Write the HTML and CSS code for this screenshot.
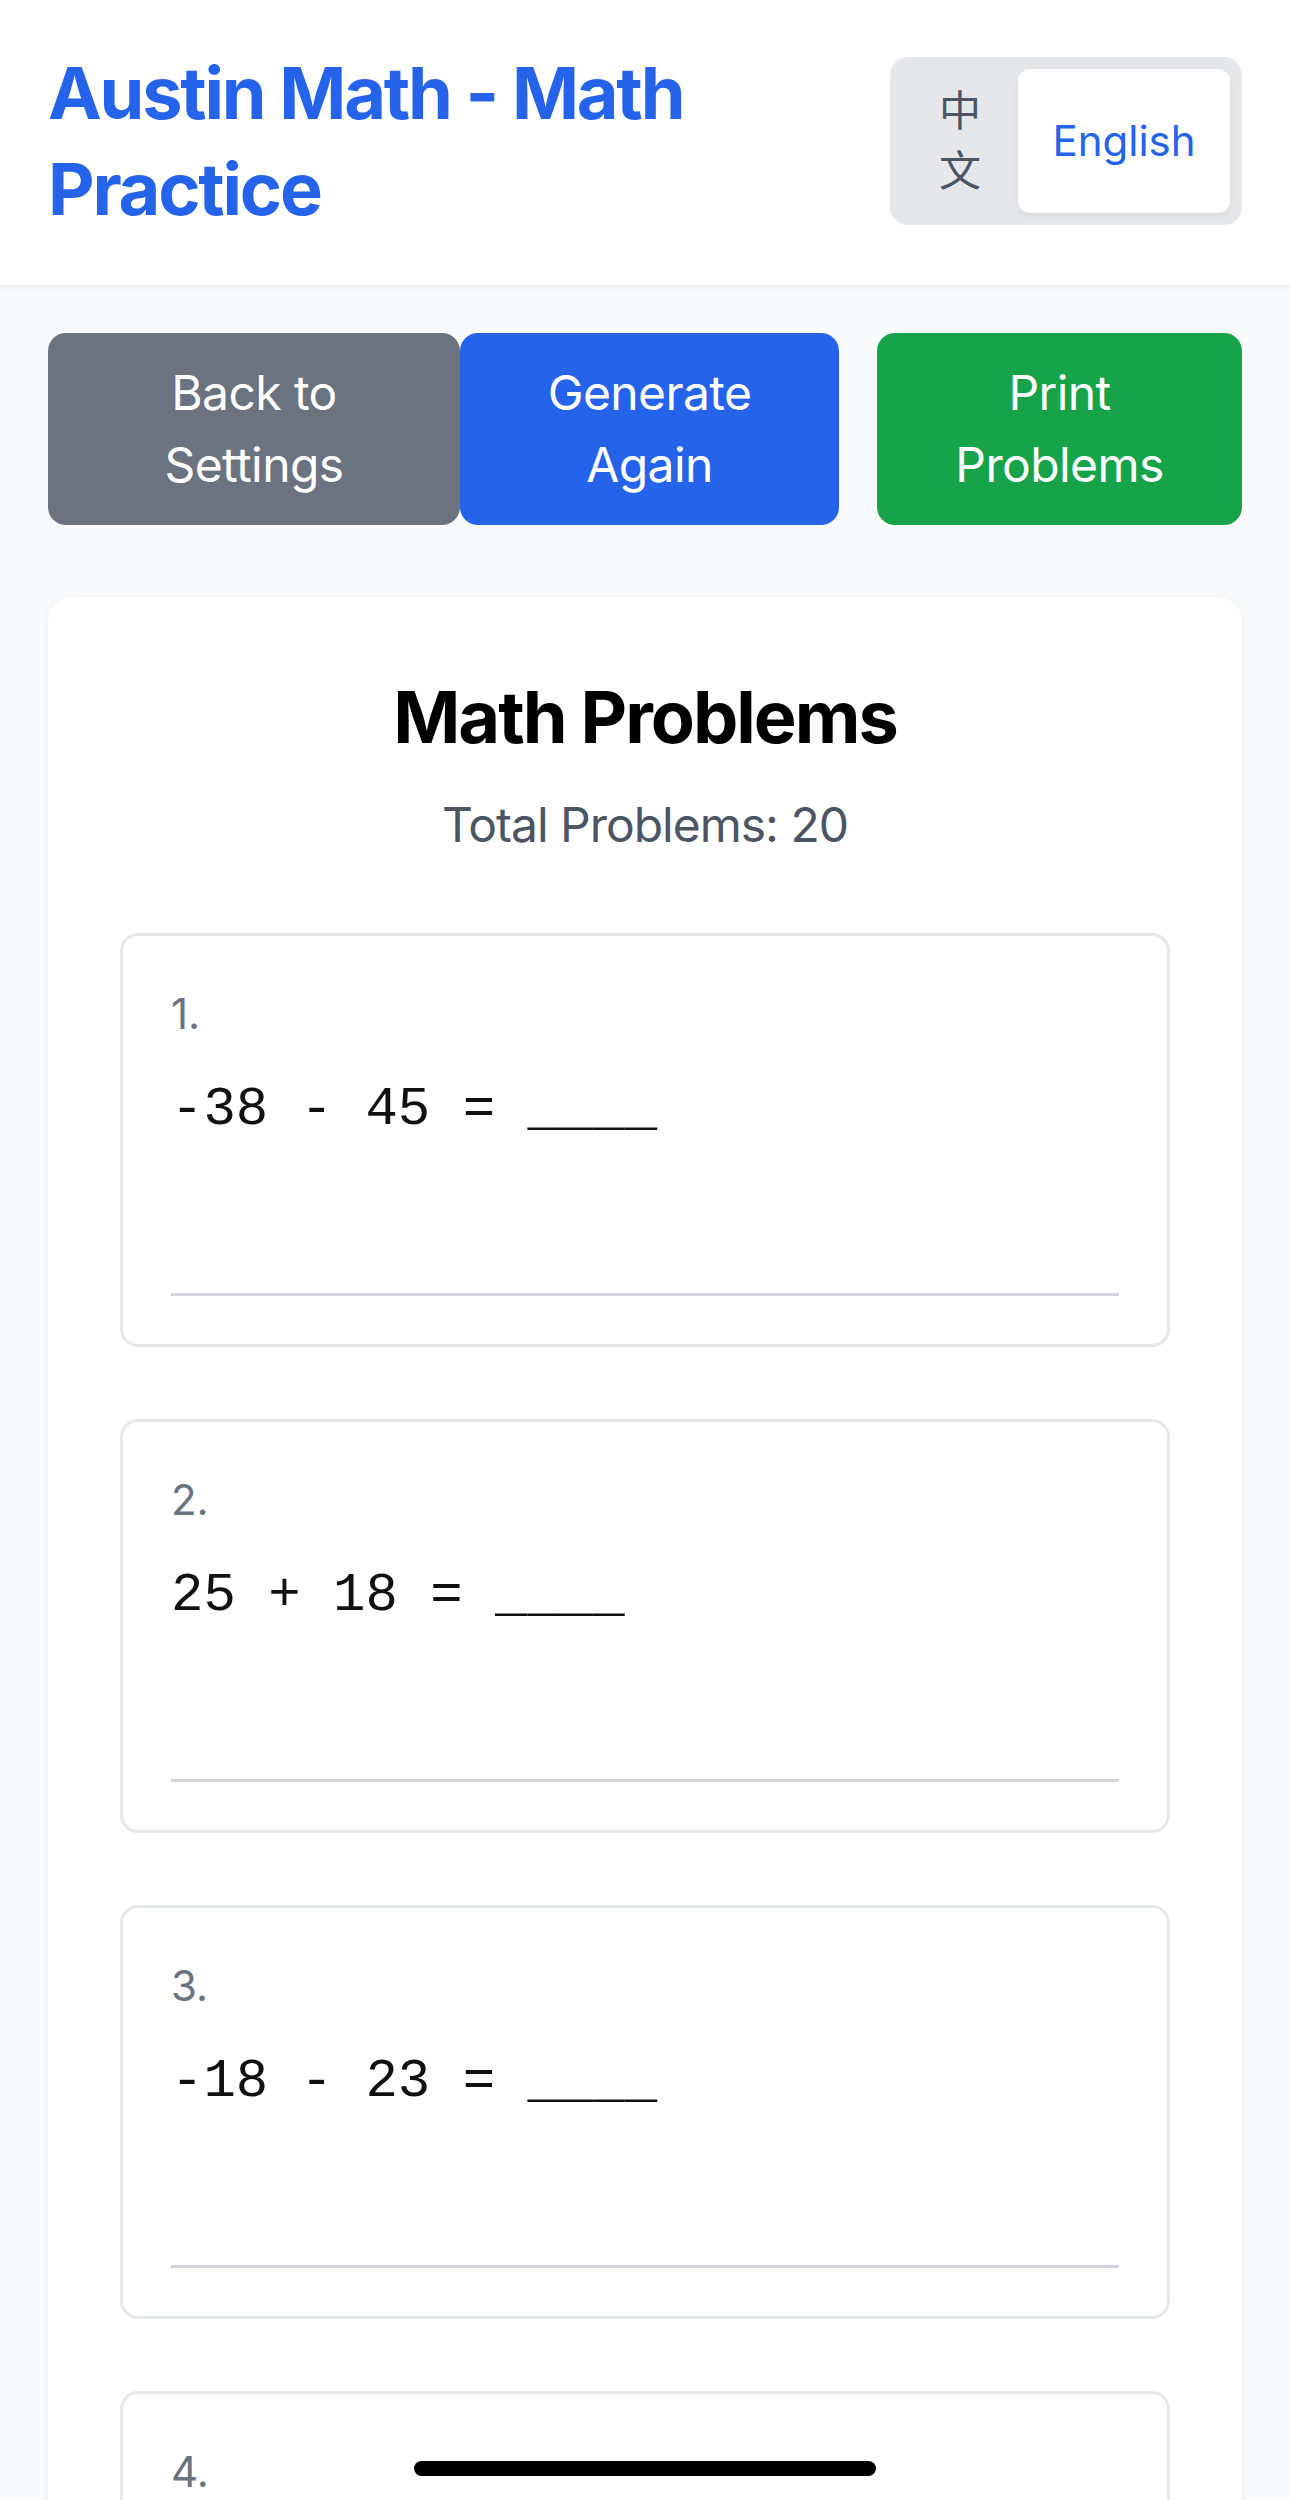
FILE: index.html
```html
<!DOCTYPE html>
<html lang="en">
<head>
<meta charset="utf-8">
<title>Austin Math - Math Practice</title>
<link rel="stylesheet" href="styles.css">
</head>
<body>
<header class="topbar">
  <h1 class="brand">Austin Math - Math Practice</h1>
  <div class="lang">
    <button class="lang-btn lang-zh">中文</button>
    <button class="lang-btn lang-en">English</button>
  </div>
</header>
<main class="page">
  <div class="actions">
    <div class="actions-left">
      <button class="btn btn-gray">Back to Settings</button>
      <button class="btn btn-blue">Generate Again</button>
    </div>
    <button class="btn btn-green">Print Problems</button>
  </div>
  <section class="sheet">
    <h2 class="sheet-title">Math Problems</h2>
    <p class="sheet-sub">Total Problems: 20</p>
    <div class="problem">
      <div class="num">1.</div>
      <div class="expr">-38 - 45 = ____</div>
      <div class="answer"></div>
    </div>
    <div class="problem">
      <div class="num">2.</div>
      <div class="expr">25 + 18 = ____</div>
      <div class="answer"></div>
    </div>
    <div class="problem">
      <div class="num">3.</div>
      <div class="expr">-18 - 23 = ____</div>
      <div class="answer"></div>
    </div>
    <div class="problem">
      <div class="num">4.</div>
      <div class="expr">37 + 26 = ____</div>
      <div class="answer"></div>
    </div>
  </section>
</main>
<div class="home-indicator"></div>
</body>
</html>
```
FILE: styles.css
```css
* { box-sizing: border-box; }
html, body { margin: 0; padding: 0; }
body {
  background: #f9fafb;
  font-family: "Inter", "Noto Sans CJK SC", sans-serif;
  color: #000;
}
.topbar {
  background: #fff;
  box-shadow: 0 3px 6px rgba(0,0,0,0.05);
  display: flex;
  justify-content: space-between;
  align-items: center;
  padding: 45px 48px 48px 48px;
}
.brand {
  margin: 0;
  font-size: 72px;
  line-height: 96px;
  font-weight: 700;
  letter-spacing: -2.2px;
  color: #2563eb;
  max-width: 760px;
}
.lang {
  display: flex;
  background: #e5e7eb;
  border-radius: 18px;
  padding: 12px;
}
.lang-btn {
  border: 0;
  font-family: "Inter", "Noto Sans CJK SC", sans-serif;
  font-size: 42px;
  line-height: 60px;
  padding: 12px 36px;
  background: transparent;
  display: flex;
  align-items: center;
  justify-content: center;
}
.lang-zh {
  width: 116px;
  color: #4b5563;
}
.lang-en {
  width: 212px;
  background: #fff;
  color: #2563eb;
  border-radius: 12px;
  box-shadow: 0 3px 6px rgba(0,0,0,0.06);
}
.page {
  padding: 48px;
}
.actions {
  display: flex;
  justify-content: space-between;
  margin-bottom: 72px;
}
.actions-left { display: flex; }
.btn {
  border: 0;
  color: #fff;
  font-family: "Inter", sans-serif;
  font-size: 48px;
  line-height: 72px;
  letter-spacing: -0.6px;
  padding: 24px 36px;
  border-radius: 18px;
  text-align: center;
}
.btn-gray { background: #6b7280; width: 412px; }
.btn-blue { background: #2563eb; width: 379px; }
.btn-green { background: #16a34a; width: 365px; }
.sheet {
  background: #fff;
  border-radius: 24px;
  box-shadow: 0 3px 9px rgba(0,0,0,0.06);
  padding: 72px;
  min-height: 2000px;
}
.sheet-title {
  margin: 0 0 24px;
  text-align: center;
  font-size: 72px;
  line-height: 96px;
  font-weight: 700;
  letter-spacing: -2px;
}
.sheet-sub {
  margin: 0 0 72px;
  text-align: center;
  font-size: 48px;
  line-height: 72px;
  letter-spacing: -1px;
  color: #4b5563;
}
.problem {
  border: 3px solid #e5e7eb;
  border-radius: 18px;
  padding: 48px;
  margin-bottom: 72px;
}
.num {
  font-size: 42px;
  line-height: 60px;
  color: #6b7280;
  margin-bottom: 24px;
}
.expr {
  font-family: "Liberation Mono", monospace;
  font-size: 54px;
  line-height: 84px;
  color: #111;
  white-space: pre;
}
.answer {
  margin-top: 48px;
  height: 96px;
  border-bottom: 3px solid #d1d5db;
}
.home-indicator {
  position: fixed;
  left: 414px;
  bottom: 24px;
  width: 462px;
  height: 15px;
  border-radius: 8px;
  background: #000;
}
```
